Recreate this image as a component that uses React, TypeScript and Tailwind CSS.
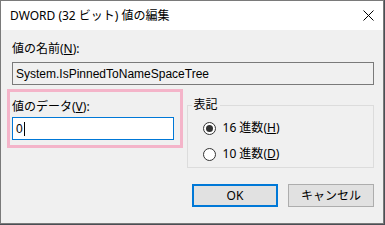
import React from "react";

const font = { fontFamily: '"Noto Sans", "Noto Sans CJK JP", sans-serif' };
const latin = { fontFamily: '"Liberation Sans", "Noto Sans CJK JP", sans-serif' };

function Radio({ checked, label, mnemonic }: { checked?: boolean; label: string; mnemonic: string }) {
  return (
    <div className="flex h-[26px] items-center pl-[11px]">
      <div className="flex h-[13px] w-[13px] items-center justify-center rounded-full border border-[#333333] bg-white">
        {checked && <div className="h-[7px] w-[7px] rounded-full bg-[#333333]" />}
      </div>
      <span className="ml-[7px] text-[12px] leading-[16px] text-black">
        {label}(<span className="underline">{mnemonic}</span>)
      </span>
    </div>
  );
}

export default function App() {
  return (
    <div className="h-[225px] w-[385px] bg-[#4a4f55]" style={font}>
      <div className="flex h-[224px] w-[384px] flex-col border border-[#7a7a7a] bg-[#f0f0f0]">
        <div className="flex h-[29px] shrink-0 items-center justify-between bg-white pl-[9px] pr-[8px]">
          <span className="text-[12px] leading-[16px] text-black">DWORD (32 ビット) 値の編集</span>
          <svg width="11" height="11" viewBox="0 0 11 11" className="mr-[1px]">
            <path d="M0.5 0.5 L10.5 10.5 M10.5 0.5 L0.5 10.5" stroke="#000" strokeWidth="1" fill="none" />
          </svg>
        </div>
        <div className="flex flex-1 flex-col pl-[6px] pr-[9px] pt-[11px]">
          <div className="ml-[5px] text-[12px] leading-[16px] text-black">
            値の名前(<span className="underline">N</span>):
          </div>
          <div
            className="ml-[5px] mt-[5px] flex h-[23px] w-[362px] items-center border border-[#7a7a7a] bg-[#f0f0f0] pl-[3px] text-[12px] text-black"
            style={latin}
          >
            System.IsPinnedToNameSpaceTree
          </div>
          <div className="mt-[4px] flex items-start">
            <div className="flex h-[59px] w-[176px] flex-col border-[3px] border-[#f4b4c9] pl-[2px] pt-[7px]">
              <div className="text-[12px] leading-[16px] text-black">
                値のデータ(<span className="underline">V</span>):
              </div>
              <div
                className="mt-[2px] flex h-[23px] w-[162px] items-center border border-[#0078d7] bg-white pl-[3px] text-[12px] text-black"
                style={latin}
              >
                0<span className="ml-[1px] inline-block h-[14px] w-[1px] bg-black" />
              </div>
            </div>
            <fieldset className="ml-[4px] mt-[8px] h-[71px] w-[188px] border border-[#dcdcdc] pl-[4px]">
              <legend className="px-[2px] text-[12px] leading-[16px] text-black">表記</legend>
              <div className="pt-[2px]">
                <Radio checked label="16 進数" mnemonic="H" />
                <Radio label="10 進数" mnemonic="D" />
              </div>
            </fieldset>
          </div>
          <div className="mt-[16px] flex justify-end gap-[10px]">
            <button className="h-[23px] w-[86px] border-2 border-[#0078d7] bg-[#e1e1e1] text-[12px] text-black">OK</button>
            <button className="h-[23px] w-[86px] border border-[#adadad] bg-[#e1e1e1] text-[12px] text-black">キャンセル</button>
          </div>
        </div>
      </div>
    </div>
  );
}
